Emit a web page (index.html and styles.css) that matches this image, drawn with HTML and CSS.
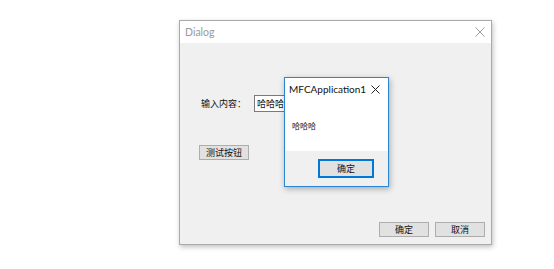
FILE: index.html
```html
<!DOCTYPE html>
<html>
<head>
<meta charset="utf-8">
<link rel="stylesheet" href="styles.css">
</head>
<body>
<div class="desktop">
  <div class="dialog">
    <div class="titlebar">
      <span class="title">Dialog</span>
      <svg class="close" width="10" height="10" viewBox="0 0 10 10"><path d="M0.5 0.5L9.5 9.5M9.5 0.5L0.5 9.5" stroke="#a0a0a0" stroke-width="1" fill="none"/></svg>
    </div>
    <div class="content">
      <div class="row">
        <span class="label">输入内容：</span>
        <div class="edit">哈哈哈</div>
      </div>
      <div class="btn test">测试按钮</div>
      <div class="footer">
        <div class="btn foot">确定</div>
        <div class="btn foot">取消</div>
      </div>
    </div>
  </div>
  <div class="msgbox">
    <div class="mtitlebar">
      <span class="mtitle">MFCApplication1</span>
      <svg class="mclose" width="9" height="9" viewBox="0 0 9 9"><path d="M0.5 0.5L8.5 8.5M8.5 0.5L0.5 8.5" stroke="#222" stroke-width="1" fill="none"/></svg>
    </div>
    <div class="mbody">哈哈哈</div>
    <div class="mfooter">
      <div class="mbtn">确定</div>
    </div>
  </div>
</div>
</body>
</html>
```
FILE: styles.css
```css
html, body {
  margin: 0;
  padding: 0;
  background: #ffffff;
}
.desktop {
  position: relative;
  width: 554px;
  height: 269px;
  overflow: hidden;
  font-family: "Noto Sans CJK SC", "Noto Sans", sans-serif;
}
.dialog {
  position: absolute;
  left: 179px;
  top: 20px;
  width: 311px;
  height: 223px;
  border: 1px solid #aaaaaa;
  box-shadow: 1px 2px 5px rgba(0,0,0,0.25);
  display: flex;
  flex-direction: column;
  background: #f0f0f0;
}
.titlebar {
  height: 22px;
  background: #ffffff;
  display: flex;
  align-items: center;
  justify-content: space-between;
  padding: 0 6px 0 5px;
}
.title {
  font-family: "Lato", "Noto Sans", sans-serif;
  font-size: 10.5px;
  color: #999999;
  margin-top: -1px;
}
.close {
  flex-shrink: 0;
}
.content {
  flex: 1;
  display: flex;
  flex-direction: column;
  padding: 52px 6px 7px 19px;
}
.row {
  display: flex;
  align-items: center;
  height: 17px;
}
.label {
  font-size: 9px;
  color: #111;
  margin-left: 2px;
  width: 53px;
}
.edit {
  width: 100px;
  height: 15px;
  border: 1px solid #7a7a7a;
  background: #fff;
  font-size: 9px;
  line-height: 15px;
  padding-left: 2px;
  color: #111;
}
.btn {
  box-sizing: border-box;
  border: 1px solid #adadad;
  background: #e1e1e1;
  font-size: 9px;
  color: #111;
  display: flex;
  align-items: center;
  justify-content: center;
}
.test {
  width: 50px;
  height: 15px;
  margin-top: 33px;
}
.footer {
  margin-top: auto;
  display: flex;
  justify-content: flex-end;
  gap: 6px;
}
.foot {
  width: 50px;
  height: 15px;
}
.msgbox {
  position: absolute;
  left: 284px;
  top: 77px;
  width: 103px;
  height: 108px;
  border: 1px solid #2b85d4;
  box-shadow: 1px 2px 6px rgba(0,0,0,0.3);
  background: #fff;
  display: flex;
  flex-direction: column;
}
.mtitlebar {
  height: 22px;
  display: flex;
  align-items: center;
  justify-content: space-between;
  padding: 0 8px 0 4px;
}
.mtitle {
  font-family: "Lato", "Noto Sans", sans-serif;
  font-size: 10px;
  color: #111;
  white-space: nowrap;
}
.mclose {
  flex-shrink: 0;
}
.mbody {
  height: 51px;
  font-size: 8px;
  color: #111;
  padding-left: 7px;
  display: flex;
  align-items: center;
}
.mfooter {
  flex: 1;
  background: #f0f0f0;
  display: flex;
  justify-content: flex-end;
  align-items: center;
  padding-right: 14px;
}
.mbtn {
  box-sizing: border-box;
  width: 56px;
  height: 19px;
  border: 2px solid #0078d7;
  background: #e1e1e1;
  font-size: 9px;
  color: #111;
  display: flex;
  align-items: center;
  justify-content: center;
}
```
